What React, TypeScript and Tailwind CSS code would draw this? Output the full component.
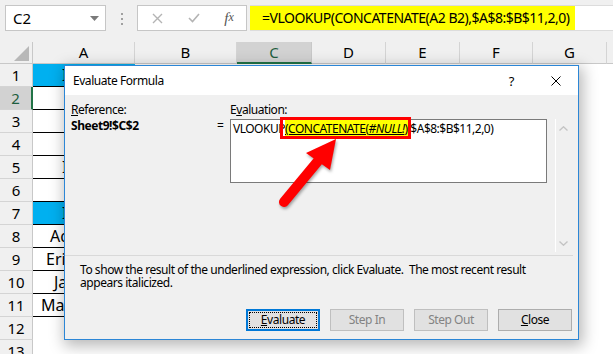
import React from "react";

const rowsData: { n: number; text?: string; pl?: number; blue?: boolean }[] = [
  { n: 1, text: "I", pl: 29, blue: true },
  { n: 2 },
  { n: 3 },
  { n: 4 },
  { n: 5, text: "I", pl: 29 },
  { n: 6 },
  { n: 7, text: "I", pl: 29, blue: true },
  { n: 8, text: "Ad", pl: 17 },
  { n: 9, text: "Eri", pl: 13 },
  { n: 10, text: "Ja", pl: 21 },
  { n: 11, text: "Ma", pl: 8 },
  { n: 12 },
  { n: 13 },
];

const cols = [
  { l: "A", w: "w-[102px]" },
  { l: "B", w: "w-[102px]" },
  { l: "C", w: "w-[75px]", sel: true },
  { l: "D", w: "w-[74px]" },
  { l: "E", w: "w-[74px]" },
  { l: "F", w: "w-[73px]" },
  { l: "G", w: "w-[74px]" },
];

function Btn({ children, disabled, focus }: { children: React.ReactNode; disabled?: boolean; focus?: boolean }) {
  if (focus) {
    return (
      <div className="flex h-[22px] w-[74px] items-center justify-center border-2 border-[#0078d7] bg-[#e1e1e1] p-[1px]">
        <div className="flex h-full w-full items-center justify-center border border-dotted border-black text-[12px] text-black">
          {children}
        </div>
      </div>
    );
  }
  return (
    <div
      className={
        "flex h-[22px] w-[74px] items-center justify-center border bg-[#e1e1e1] text-[12px] " +
        (disabled ? "border-[#bfbfbf] text-[#838383]" : "border-[#adadad] text-black")
      }
    >
      {children}
    </div>
  );
}

export default function App() {
  return (
    <div className="relative h-[354px] w-[613px] overflow-hidden bg-white font-['Noto_Sans',sans-serif]">
      {/* Formula bar */}
      <div className="flex h-[42px] items-start bg-[#f0f0f0] pt-[5px]">
        <div className="ml-[5px] flex h-[26px] w-[101px] items-center justify-between border border-[#c6c6c6] bg-white pl-[7px] pr-[6px] text-[15px] leading-none text-black">
          <span>C2</span>
          <svg width="9" height="5" viewBox="0 0 9 5">
            <path d="M0 0h9L4.5 5z" fill="#7a7a7a" />
          </svg>
        </div>
        <div className="ml-[15px] flex flex-col gap-[3px] pt-[8px]">
          <div className="h-[2px] w-[2px] bg-[#a0a0a0]" />
          <div className="h-[2px] w-[2px] bg-[#a0a0a0]" />
          <div className="h-[2px] w-[2px] bg-[#a0a0a0]" />
        </div>
        <div className="ml-[14px] flex h-[26px] w-[110px] items-center border border-[#c6c6c6] bg-white">
          <div className="flex w-[38px] justify-center">
            <svg width="11" height="11" viewBox="0 0 11 11">
              <path d="M1 1L10 10M10 1L1 10" stroke="#b4b4b4" strokeWidth="1.4" />
            </svg>
          </div>
          <div className="flex w-[36px] justify-center">
            <svg width="12" height="10" viewBox="0 0 12 10">
              <path d="M1 5L4.5 8.5L11 1" stroke="#b4b4b4" strokeWidth="1.6" fill="none" />
            </svg>
          </div>
          <div className="flex w-[34px] justify-center font-['Liberation_Serif',serif] text-[15px] italic leading-none text-[#555]">
            f<span className="text-[12px]">x</span>
          </div>
        </div>
        <div className="ml-[3px] flex h-[26px] flex-1 border-y border-[#dcdcdc] bg-white">
          <div className="flex h-full w-[325px] items-center whitespace-nowrap bg-[#ffff00] pl-[12px] text-[14px] leading-none tracking-[-0.5px] text-black">
            =VLOOKUP(CONCATENATE(A2 B2),$A$8:$B$11,2,0)
          </div>
        </div>
      </div>

      {/* Column headers */}
      <div className="flex h-[22px] bg-[#f0f0f0]">
        <div className="relative w-[33px] border-b border-r border-[#c8c8c8]">
          <svg className="absolute bottom-[2px] right-[3px]" width="15" height="15" viewBox="0 0 15 15">
            <path d="M15 0V15H0z" fill="#b8b8b8" />
          </svg>
        </div>
        {cols.map((c) => (
          <div
            key={c.l}
            className={
              c.w +
              " flex items-center justify-center border-r text-[15px] leading-none " +
              (c.sel
                ? "border-[#c8c8c8] border-b-2 border-b-[#217346] bg-[#d2d2d2] text-[#1e5e3f]"
                : "border-[#d4d4d4] border-b border-b-[#c8c8c8] text-black")
            }
          >
            {c.l}
          </div>
        ))}
        <div className="flex-1 border-b border-[#c8c8c8]" />
      </div>

      {/* Rows */}
      <div className="flex flex-col">
        {rowsData.map((r) => (
          <div key={r.n} className="flex h-[23px]">
            <div
              className={
                "flex w-[33px] items-center justify-center border-b border-[#d4d4d4] text-[15px] leading-none " +
                (r.n === 2
                  ? "border-r-2 border-r-[#217346] bg-[#d2d2d2] text-[#1e5e3f]"
                  : "border-r border-r-[#c8c8c8] bg-[#f0f0f0] text-black")
              }
            >
              {r.n}
            </div>
            <div
              className={
                "flex w-[102px] items-center overflow-hidden whitespace-nowrap text-[16px] leading-none text-black " +
                (r.n <= 11 ? "border-b border-black " : "") +
                (r.blue ? "bg-[#00b0f0]" : "bg-white")
              }
              style={{ paddingLeft: r.pl ?? 0 }}
            >
              {r.text}
            </div>
            <div className="flex-1 bg-white" />
          </div>
        ))}
      </div>

      {/* Dialog */}
      <div className="absolute left-[64px] top-[65px] flex h-[275px] w-[515px] flex-col border border-[#2b86d6] bg-[#f0f0f0] text-[12px] leading-[14px] tracking-[-0.45px] text-black shadow-[2px_4px_14px_2px_rgba(0,0,0,0.28)]">
        <div className="flex h-[29px] items-center bg-white pl-[8px]">
          <span className="flex-1">Evaluate Formula</span>
          <span className="mr-[37px] text-[13px]">?</span>
          <svg className="mr-[17px]" width="10" height="10" viewBox="0 0 10 10">
            <path d="M0.5 0.5L9.5 9.5M9.5 0.5L0.5 9.5" stroke="#000" strokeWidth="1" />
          </svg>
        </div>
        <div className="flex flex-1 flex-col pt-[8px]">
          <div className="flex items-start pl-[6px]">
            <div className="flex w-[141px] flex-col">
              <span>
                <span className="underline">R</span>eference:
              </span>
              <span className="mt-[2px] font-bold">Sheet9!$C$2</span>
            </div>
            <div className="mt-[16px] w-[18px] pl-[5px]">=</div>
            <div className="flex flex-col">
              <span>
                E<span className="underline">v</span>aluation:
              </span>
              <div className="mt-[2px] flex items-start">
                <div className="h-[64px] w-[317px] whitespace-nowrap border border-[#7a7a7a] bg-white pl-[2px] pt-[1px] leading-[16px] tracking-[-0.5px]">
                  VLOOKUP
                  <span className="bg-[#ffff00] underline">
                    (CONCATENATE(<span className="italic">#NULL!</span>),
                  </span>
                  $A$8:$B$11,2,0)
                </div>
                <div className="ml-[8px] flex h-[133px] w-[12px] flex-col justify-between border-l border-white pb-[6px] pl-[3px] pt-[7px]">
                  <svg width="9" height="5" viewBox="0 0 9 5">
                    <path d="M0.5 4.5L4.5 0.8L8.5 4.5" stroke="#c4c4c4" strokeWidth="1.4" fill="none" />
                  </svg>
                  <svg width="9" height="5" viewBox="0 0 9 5">
                    <path d="M0.5 0.5L4.5 4.2L8.5 0.5" stroke="#c4c4c4" strokeWidth="1.4" fill="none" />
                  </svg>
                </div>
              </div>
            </div>
          </div>
          <div className="mr-[5px] mt-[3px] h-px bg-[#d9d9d9]" />
          <div className="mt-[7px] pl-[15px] leading-[13px]">
            To show the result of the underlined expression, click Evaluate.&nbsp; The most recent result
            <br />
            appears italicized.
          </div>
          <div className="mt-[20px] flex justify-end gap-[10px] pr-[6px]">
            <Btn focus>
              <span>
                <span className="underline">E</span>valuate
              </span>
            </Btn>
            <Btn disabled>Step In</Btn>
            <Btn disabled>Step Out</Btn>
            <Btn>
              <span>
                <span className="underline">C</span>lose
              </span>
            </Btn>
          </div>
        </div>
      </div>

      {/* Red annotation box */}
      <div className="pointer-events-none absolute left-[280px] top-[117px] h-[22px] w-[131px] border-[3px] border-[#ff0000]" />

      {/* Red arrow */}
      <svg
        className="pointer-events-none absolute left-0 top-0"
        width="613"
        height="354"
        viewBox="0 0 613 354"
        style={{ filter: "drop-shadow(1px 2px 1.5px rgba(0,0,0,0.35))" }}
      >
        <line x1="284" y1="202" x2="318" y2="161" stroke="#ff0000" strokeWidth="10" strokeLinecap="round" />
        <polygon points="336,139 306,153 330,170" fill="#ff0000" />
      </svg>
    </div>
  );
}
